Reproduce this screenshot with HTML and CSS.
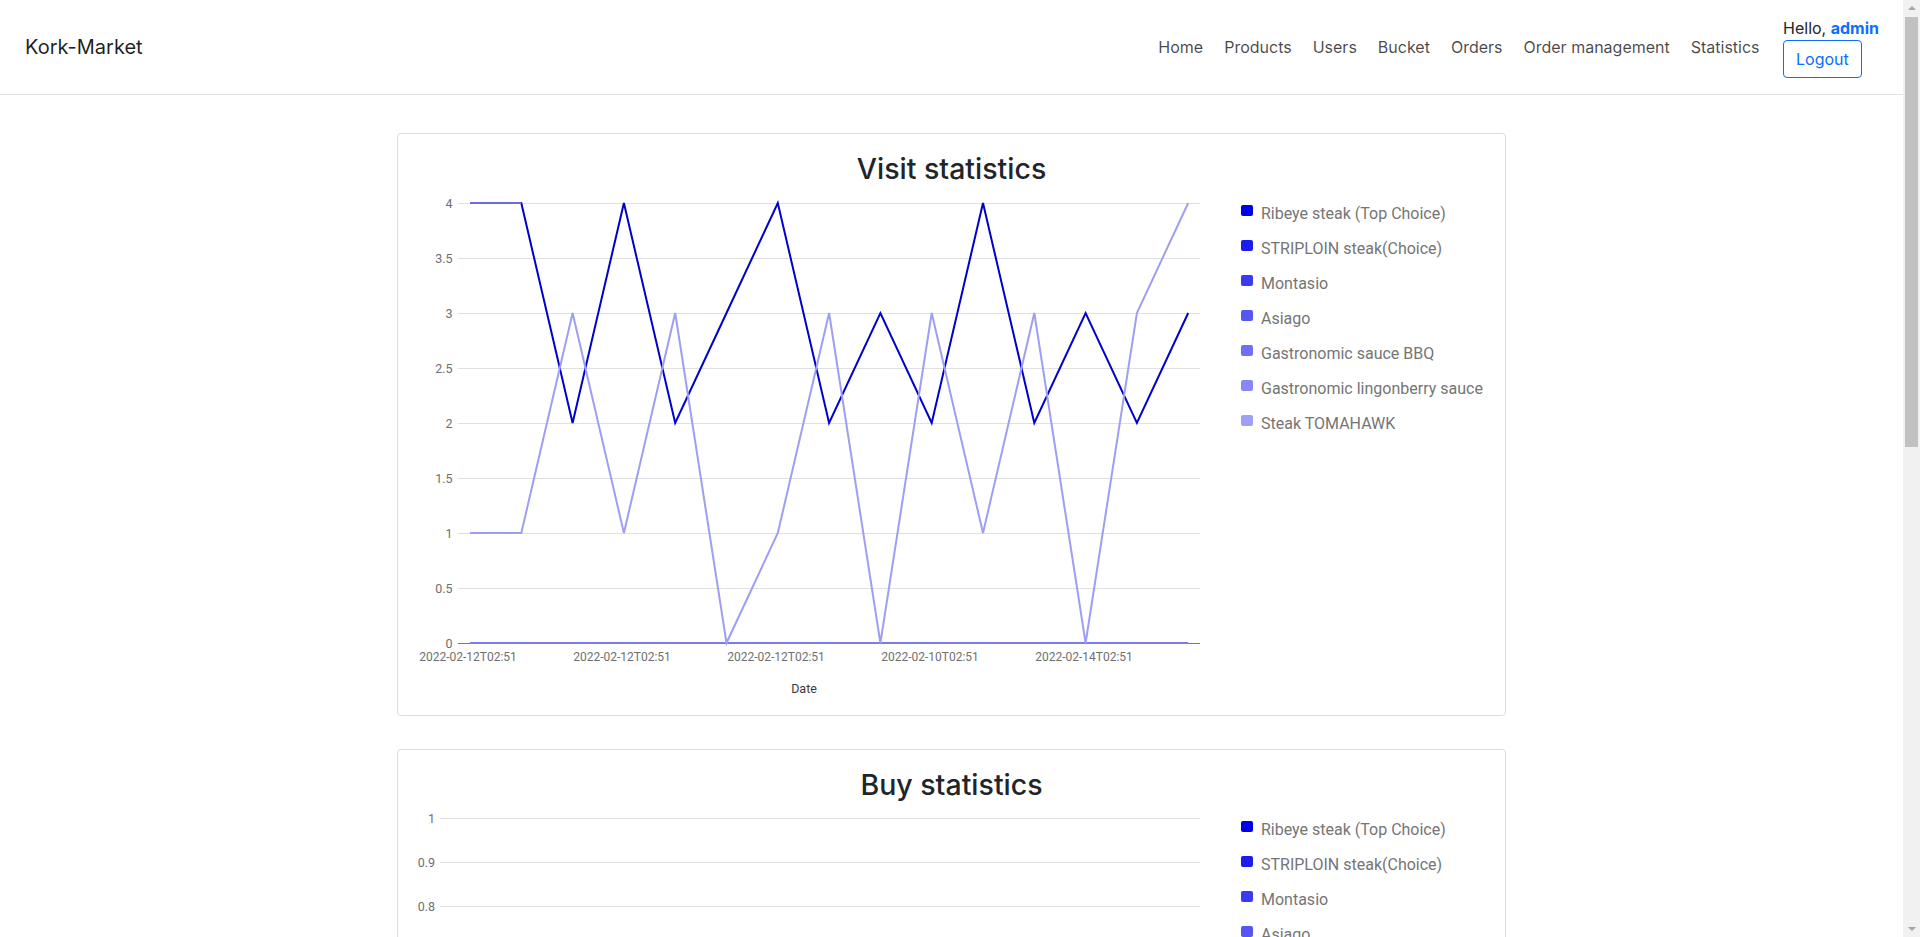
FILE: index.html
```html
<!DOCTYPE html>
<html lang="en">
<head>
<meta charset="utf-8">
<title>Kork-Market — Statistics</title>
<link rel="stylesheet" href="styles.css">
</head>
<body>
<nav class="navbar">
  <a class="brand" href="#">Kork-Market</a>
  <div class="nav-right">
    <ul class="nav-links">
      <li><a href="#">Home</a></li>
      <li><a href="#">Products</a></li>
      <li><a href="#">Users</a></li>
      <li><a href="#">Bucket</a></li>
      <li><a href="#">Orders</a></li>
      <li><a href="#">Order management</a></li>
      <li><a href="#">Statistics</a></li>
    </ul>
    <div class="user">
      <span class="hello">Hello, <b class="uname">admin</b></span>
      <button class="logout" type="button">Logout</button>
    </div>
  </div>
</nav>

<main class="content">
  <section class="card">
    <h3 class="card-title">Visit statistics</h3>
    <div class="chart-body">
      <svg class="plot" viewBox="0 0 843 529" width="843" height="529">
        <g class="grid">
          <line x1="60" y1="17.5" x2="802" y2="17.5"/>
          <line x1="60" y1="72.5" x2="802" y2="72.5"/>
          <line x1="60" y1="127.5" x2="802" y2="127.5"/>
          <line x1="60" y1="182.5" x2="802" y2="182.5"/>
          <line x1="60" y1="237.5" x2="802" y2="237.5"/>
          <line x1="60" y1="292.5" x2="802" y2="292.5"/>
          <line x1="60" y1="347.5" x2="802" y2="347.5"/>
          <line x1="60" y1="402.5" x2="802" y2="402.5"/>
        </g>
        <line class="baseline" x1="60" y1="457.5" x2="802" y2="457.5"/>
        <g class="ylab">
          <text x="54.5" y="17.5">4</text>
          <text x="54.5" y="72.5">3.5</text>
          <text x="54.5" y="127.5">3</text>
          <text x="54.5" y="182.5">2.5</text>
          <text x="54.5" y="237.5">2</text>
          <text x="54.5" y="292.5">1.5</text>
          <text x="54.5" y="347.5">1</text>
          <text x="54.5" y="402.5">0.5</text>
          <text x="54.5" y="457.5">0</text>
        </g>
        <polyline class="s1" points="72,17 123.3,17 174.6,237 225.9,17 277.2,237 328.5,127 379.8,17 431.1,237 482.4,127 533.7,237 585,17 636.3,237 687.6,127 738.9,237 790.2,127"/>
        <polyline class="s5" points="72,17 123.3,17"/>
        <polyline class="s6" points="72,457 790.2,457"/>
        <polyline class="s7" points="72,347 123.3,347 174.6,127 225.9,347 277.2,127 328.5,457 379.8,347 431.1,127 482.4,457 533.7,127 585,347 636.3,127 687.6,457 738.9,127 790.2,17"/>
        <g class="xlab">
          <text x="70" y="471">2022-02-12T02:51</text>
          <text x="224" y="471">2022-02-12T02:51</text>
          <text x="378" y="471">2022-02-12T02:51</text>
          <text x="532" y="471">2022-02-10T02:51</text>
          <text x="686" y="471">2022-02-14T02:51</text>
        </g>
        <text class="axis-title" x="406" y="502">Date</text>
      </svg>
      <ul class="legend">
        <li><span class="swatch c1"></span>Ribeye steak (Top Choice)</li>
        <li><span class="swatch c2"></span>STRIPLOIN steak(Choice)</li>
        <li><span class="swatch c3"></span>Montasio</li>
        <li><span class="swatch c4"></span>Asiago</li>
        <li><span class="swatch c5"></span>Gastronomic sauce BBQ</li>
        <li><span class="swatch c6"></span>Gastronomic lingonberry sauce</li>
        <li><span class="swatch c7"></span>Steak TOMAHAWK</li>
      </ul>
    </div>
  </section>

  <section class="card">
    <h3 class="card-title">Buy statistics</h3>
    <div class="chart-body">
      <svg class="plot" viewBox="0 0 843 529" width="843" height="529">
        <g class="grid">
          <line x1="42" y1="16.5" x2="802" y2="16.5"/>
          <line x1="42" y1="60.5" x2="802" y2="60.5"/>
          <line x1="42" y1="104.5" x2="802" y2="104.5"/>
          <line x1="42" y1="148.5" x2="802" y2="148.5"/>
          <line x1="42" y1="192.5" x2="802" y2="192.5"/>
          <line x1="42" y1="236.5" x2="802" y2="236.5"/>
          <line x1="42" y1="280.5" x2="802" y2="280.5"/>
          <line x1="42" y1="324.5" x2="802" y2="324.5"/>
          <line x1="42" y1="368.5" x2="802" y2="368.5"/>
          <line x1="42" y1="412.5" x2="802" y2="412.5"/>
        </g>
        <line class="baseline" x1="42" y1="456.5" x2="802" y2="456.5"/>
        <g class="ylab">
          <text x="37" y="16.5">1</text>
          <text x="37" y="60.5">0.9</text>
          <text x="37" y="104.5">0.8</text>
          <text x="37" y="148.5">0.7</text>
          <text x="37" y="192.5">0.6</text>
          <text x="37" y="236.5">0.5</text>
          <text x="37" y="280.5">0.4</text>
          <text x="37" y="324.5">0.3</text>
          <text x="37" y="368.5">0.2</text>
          <text x="37" y="412.5">0.1</text>
          <text x="37" y="456.5">0</text>
        </g>
        <polyline class="s6" points="54,456 790,456"/>
        <g class="xlab">
          <text x="54" y="470">2022-02-12T02:51</text>
          <text x="422" y="470">2022-02-12T02:51</text>
          <text x="790" y="470">2022-02-14T02:51</text>
        </g>
        <text class="axis-title" x="422" y="501">Date</text>
      </svg>
      <ul class="legend">
        <li><span class="swatch c1"></span>Ribeye steak (Top Choice)</li>
        <li><span class="swatch c2"></span>STRIPLOIN steak(Choice)</li>
        <li><span class="swatch c3"></span>Montasio</li>
        <li><span class="swatch c4"></span>Asiago</li>
        <li><span class="swatch c5"></span>Gastronomic sauce BBQ</li>
        <li><span class="swatch c6"></span>Gastronomic lingonberry sauce</li>
        <li><span class="swatch c7"></span>Steak TOMAHAWK</li>
      </ul>
    </div>
  </section>

  <section class="card">
    <h3 class="card-title">Bucket statistics</h3>
    <div class="chart-body">
      <svg class="plot" viewBox="0 0 843 529" width="843" height="529">
        <g class="grid">
          <line x1="42" y1="16.5" x2="802" y2="16.5"/>
          <line x1="42" y1="126.5" x2="802" y2="126.5"/>
          <line x1="42" y1="236.5" x2="802" y2="236.5"/>
          <line x1="42" y1="346.5" x2="802" y2="346.5"/>
        </g>
        <line class="baseline" x1="42" y1="456.5" x2="802" y2="456.5"/>
        <polyline class="s6" points="54,456 790,456"/>
        <text class="axis-title" x="422" y="501">Date</text>
      </svg>
      <ul class="legend">
        <li><span class="swatch c1"></span>Ribeye steak (Top Choice)</li>
        <li><span class="swatch c2"></span>STRIPLOIN steak(Choice)</li>
        <li><span class="swatch c3"></span>Montasio</li>
        <li><span class="swatch c4"></span>Asiago</li>
        <li><span class="swatch c5"></span>Gastronomic sauce BBQ</li>
        <li><span class="swatch c6"></span>Gastronomic lingonberry sauce</li>
        <li><span class="swatch c7"></span>Steak TOMAHAWK</li>
      </ul>
    </div>
  </section>
</main>

<div class="scrollbar" aria-hidden="true">
  <span class="sb-arrow sb-up"></span>
  <span class="sb-thumb"></span>
  <span class="sb-arrow sb-down"></span>
</div>
</body>
</html>
```

FILE: styles.css
```css
body {
  margin: 0 17px 0 0;
  background: #ffffff;
  color: #212529;
  font-family: Inter, "Liberation Sans", sans-serif;
  font-size: 16px;
  line-height: 1.5;
}

/* ---------- navbar ---------- */
.navbar {
  display: flex;
  align-items: center;
  justify-content: space-between;
  height: 94px;
  padding: 0 24px 0 25px;
  border-bottom: 1px solid #dee2e6;
}

.brand {
  font-size: 20px;
  line-height: 30px;
  color: rgba(0, 0, 0, 0.88);
  text-decoration: none;
}

.nav-right {
  display: flex;
  align-items: center;
}

.nav-links {
  display: flex;
  list-style: none;
  margin: 0;
  padding: 0;
}

.nav-links a {
  display: block;
  padding: 0 10.5px;
  line-height: 24px;
  color: rgba(0, 0, 0, 0.72);
  text-decoration: none;
}

.user {
  display: flex;
  flex-direction: column;
  align-items: flex-start;
  margin-left: 13px;
}

.hello {
  line-height: 24px;
  color: #212529;
}

.uname {
  color: #0d6efd;
  font-weight: 700;
}

.logout {
  font-family: inherit;
  font-size: 16px;
  line-height: 24px;
  padding: 6px 12px;
  color: #0d6efd;
  background: #ffffff;
  border: 1px solid #0d6efd;
  border-radius: 4px;
}

/* ---------- content ---------- */
.content {
  display: flex;
  flex-direction: column;
  align-items: center;
  gap: 33px;
  padding: 38px 0 24px;
}

.card {
  width: 1107px;
  border: 1px solid #dcdcdc;
  border-radius: 4px;
  padding-top: 18px;
}

.card-title {
  margin: 0;
  font-size: 28.5px;
  font-weight: 500;
  line-height: 34px;
  text-align: center;
  color: #212529;
}

.chart-body {
  display: flex;
}

.plot {
  display: block;
  flex: none;
  width: 843px;
  height: 529px;
  font-family: Roboto, "Liberation Sans", sans-serif;
}

.grid line {
  stroke: #e0e0e0;
  stroke-width: 1;
}

.baseline {
  stroke: #7a7a7a;
  stroke-width: 1;
}

.ylab text {
  font-size: 12.5px;
  fill: #6f6f6f;
  text-anchor: end;
  dominant-baseline: central;
}

.xlab text {
  font-size: 12px;
  fill: #6f6f6f;
  text-anchor: middle;
  dominant-baseline: central;
}

.axis-title {
  font-size: 12.5px;
  fill: #3c3c3c;
  text-anchor: middle;
  dominant-baseline: central;
}

polyline {
  fill: none;
  stroke-width: 2;
  stroke-linejoin: miter;
}

.s1 { stroke: #0000cc; }
.s5 { stroke: #6c6cdf; }
.s6 { stroke: #7b7bee; }
.s7 { stroke: #9e9ef3; }

/* ---------- legend ---------- */
.legend {
  list-style: none;
  margin: 10px 0 0;
  padding: 0;
  font-family: Roboto, "Liberation Sans", sans-serif;
  font-size: 16px;
  color: #757575;
}

.legend li {
  display: flex;
  align-items: flex-start;
  height: 35px;
  line-height: 35px;
  white-space: nowrap;
}

.swatch {
  flex: none;
  width: 12px;
  height: 11px;
  margin: 9px 8px 0 0;
  border-radius: 2px;
}

.c1 { background: #0000e6; }
.c2 { background: #1c1ced; }
.c3 { background: #3a3af0; }
.c4 { background: #5656f2; }
.c5 { background: #7070f4; }
.c6 { background: #8787f5; }
.c7 { background: #9f9ff7; }

/* ---------- browser scrollbar look-alike (overlay) ---------- */
.scrollbar {
  position: fixed;
  top: 0;
  right: 0;
  width: 17px;
  height: 100vh;
  background: #f1f1f1;
  display: flex;
  flex-direction: column;
  align-items: center;
}

.sb-arrow {
  flex: none;
  width: 0;
  height: 0;
  border-left: 4px solid transparent;
  border-right: 4px solid transparent;
}

.sb-up {
  margin: 6px 0 5px;
  border-bottom: 4px solid #a3a3a3;
}

.sb-down {
  margin: auto 0 6px;
  border-top: 4px solid #a3a3a3;
}

.sb-thumb {
  flex: none;
  width: 13px;
  height: 430px;
  margin-top: 2px;
  background: #c1c1c1;
}
```
